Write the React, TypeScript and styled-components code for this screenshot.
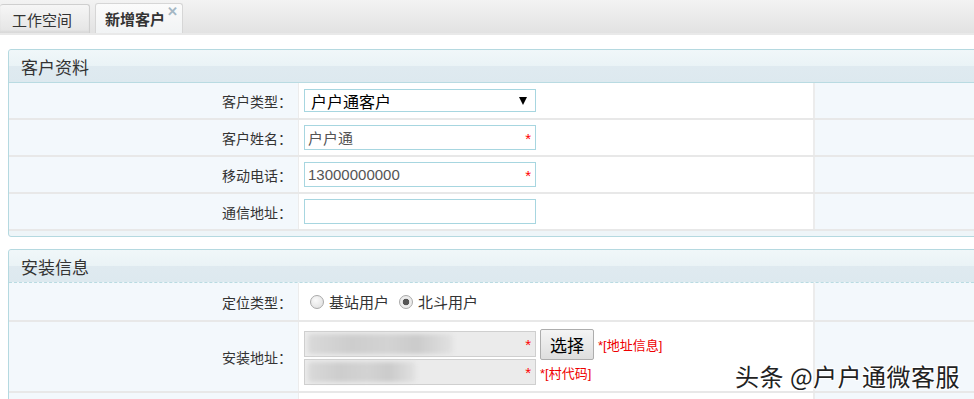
import React from "react";
import styled, { createGlobalStyle } from "styled-components";

const Global = createGlobalStyle`
  html, body { margin: 0; padding: 0; background: #fff; overflow: hidden; }
  body { font-family: "Liberation Sans", "Noto Sans CJK SC", sans-serif; color: #333; }
`;

const Page = styled.div`
  width: 974px;
  height: 399px;
  overflow: hidden;
  position: relative;
`;

const TabBar = styled.div`
  height: 33px;
  display: flex;
  align-items: flex-end;
  background: linear-gradient(#f3f3f3, #e2e2e2);
  border-bottom: 2px solid #e9e9e9;
`;

const Tab = styled.div<{ $active?: boolean }>`
  height: ${(p) => (p.$active ? 30 : 29)}px;
  width: ${(p) => (p.$active ? 88 : 90)}px;
  box-sizing: border-box;
  margin-right: 5px;
  padding-left: ${(p) => (p.$active ? 9 : 12)}px;
  display: flex;
  align-items: center;
  position: relative;
  font-size: 15px;
  font-weight: ${(p) => (p.$active ? 700 : 400)};
  color: #333;
  border: 1px solid ${(p) => (p.$active ? "#d6d6d6" : "#cfcfcf")};
  border-bottom: none;
  border-left: ${(p) => (p.$active ? "1px solid #d6d6d6" : "none")};
  border-radius: 3px 3px 0 0;
  background: ${(p) =>
    p.$active ? "linear-gradient(#fbfbfb, #f1f3f4)" : "linear-gradient(#f6f6f6, #e4e4e4)"};
  box-shadow: ${(p) => (p.$active ? "none" : "inset 0 -2px 2px rgba(0,0,0,0.05)")};
`;

const Close = styled.span`
  position: absolute;
  right: 4px;
  top: 1px;
  font-size: 13px;
  font-weight: 700;
  color: #a4b7c4;
  line-height: 1;
`;

const Content = styled.div`
  padding: 14px 0 0 8px;
  display: flex;
  flex-direction: column;
  gap: 12px;
`;

const Panel = styled.div`
  width: 1000px;
  border: 1px solid #b5d9e0;
  border-radius: 3px 0 0 3px;
  background: #eef5f8;
  padding-bottom: 5px;
`;

const PanelHeader = styled.div<{ $dotted?: boolean }>`
  height: 32px;
  display: flex;
  align-items: center;
  padding-left: 12px;
  font-size: 17px;
  color: #333;
  background: linear-gradient(#f0f7f9 0%, #eaf3f6 50%, #dfeaf0 51%, #dde9ef 100%);
  border-bottom: 1px ${(p) => (p.$dotted ? "dashed" : "solid")} #b9dbe2;
  border-radius: 3px 0 0 0;
`;

const Row = styled.div<{ $h: number }>`
  display: grid;
  grid-template-columns: 290px 514px 1fr;
  height: ${(p) => p.$h}px;
  border-bottom: 2px solid #e8e8e8;
  background: #fff;
`;

const Label = styled.div`
  background: #f3f8fc;
  display: flex;
  align-items: center;
  justify-content: flex-end;
  padding-right: 6px;
  font-size: 14px;
  color: #333;
  border-right: 1px solid #ececec;
`;

const Cell = styled.div`
  display: flex;
  align-items: center;
  padding-left: 5px;
  gap: 4px;
`;

const Filler = styled.div`
  background: #f3f8fc;
  border-left: 2px solid #ececec;
`;

const Select = styled.div`
  width: 232px;
  height: 23px;
  border: 1px solid #a7d6e0;
  display: flex;
  align-items: center;
  justify-content: space-between;
  padding: 0 8px 0 6px;
  box-sizing: border-box;
  font-size: 16px;
  color: #000;
`;

const Arrow = styled.span`
  width: 0;
  height: 0;
  border-left: 4px solid transparent;
  border-right: 4px solid transparent;
  border-top: 8px solid #000;
`;

const Input = styled.div<{ $gray?: boolean }>`
  width: 232px;
  height: 25px;
  flex: none;
  box-sizing: border-box;
  border: 1px solid ${(p) => (p.$gray ? "#cfcfcf" : "#a7d6e0")};
  background: ${(p) => (p.$gray ? "#ebebeb" : "#fff")};
  position: relative;
  display: flex;
  align-items: center;
  padding-left: 3px;
  font-size: 15px;
  color: #555;
`;

const Star = styled.span`
  position: absolute;
  right: 4px;
  top: 5px;
  color: #f00;
  font-size: 15px;
  line-height: 1;
`;

const Blur = styled.div<{ $w: number }>`
  width: ${(p) => p.$w}px;
  height: 20px;
  border-radius: 4px;
  background: linear-gradient(90deg, #d9d9d9, #cdcdcd 30%, #d3d3d3 55%, #cbcbcb 75%, #e2e2e2);
  filter: blur(2px);
`;

const Radio = styled.span<{ $checked?: boolean }>`
  width: 14px;
  height: 14px;
  border-radius: 50%;
  border: 1px solid #a9a9a9;
  background: ${(p) =>
    p.$checked
      ? "radial-gradient(circle, #555 0 3px, #ececec 3.6px)"
      : "radial-gradient(circle at 40% 35%, #fafafa 0, #dcdcdc 100%)"};
  box-sizing: border-box;
  margin-right: 5px;
`;

const RadioGroup = styled.div`
  display: flex;
  align-items: center;
  padding-left: 11px;
  gap: 10px;
`;

const RadioLabel = styled.span`
  font-size: 15px;
  color: #333;
  display: flex;
  align-items: center;
`;

const AddrCell = styled.div`
  display: flex;
  flex-direction: column;
  padding: 9px 0 0 5px;
  gap: 2px;
`;

const AddrLine = styled.div`
  display: flex;
  align-items: center;
  gap: 4px;
  height: 26px;
`;

const AddrInput = styled(Input)`
  height: 26px;
`;

const Button = styled.div`
  width: 54px;
  height: 31px;
  flex: none;
  box-sizing: border-box;
  border: 1px solid #adadad;
  border-radius: 2px;
  background: linear-gradient(#f4f4f4, #dedede);
  display: flex;
  align-items: center;
  justify-content: center;
  font-size: 17px;
  color: #000;
`;

const Hint = styled.span`
  color: #e00;
  font-size: 13px;
  white-space: nowrap;
`;

const Watermark = styled.div`
  position: absolute;
  left: 735px;
  top: 358px;
  font-size: 24px;
  color: #222;
  letter-spacing: 0.5px;
  text-shadow: 0 0 2px #fff, 1px 1px 0 #fff, -1px -1px 0 #fff, 1px -1px 0 #fff, -1px 1px 0 #fff;
  font-family: "Noto Sans CJK SC", sans-serif;
`;

export default function App() {
  return (
    <Page>
      <Global />
      <TabBar>
        <Tab>工作空间</Tab>
        <Tab $active>
          新增客户<Close>✕</Close>
        </Tab>
      </TabBar>
      <Content>
        <Panel>
          <PanelHeader>客户资料</PanelHeader>
          <Row $h={35}>
            <Label>客户类型：</Label>
            <Cell>
              <Select>
                户户通客户
                <Arrow />
              </Select>
            </Cell>
            <Filler />
          </Row>
          <Row $h={35}>
            <Label>客户姓名：</Label>
            <Cell>
              <Input>
                户户通<Star>*</Star>
              </Input>
            </Cell>
            <Filler />
          </Row>
          <Row $h={35}>
            <Label>移动电话：</Label>
            <Cell>
              <Input>
                13000000000<Star>*</Star>
              </Input>
            </Cell>
            <Filler />
          </Row>
          <Row $h={35}>
            <Label>通信地址：</Label>
            <Cell>
              <Input />
            </Cell>
            <Filler />
          </Row>
        </Panel>
        <Panel>
          <PanelHeader $dotted>安装信息</PanelHeader>
          <Row $h={37}>
            <Label>定位类型：</Label>
            <RadioGroup>
              <RadioLabel>
                <Radio />
                基站用户
              </RadioLabel>
              <RadioLabel>
                <Radio $checked />
                北斗用户
              </RadioLabel>
            </RadioGroup>
            <Filler />
          </Row>
          <Row $h={69}>
            <Label>安装地址：</Label>
            <AddrCell>
              <AddrLine>
                <AddrInput $gray>
                  <Blur $w={145} />
                  <Star>*</Star>
                </AddrInput>
                <Button>选择</Button>
                <Hint>*[地址信息]</Hint>
              </AddrLine>
              <AddrLine>
                <AddrInput $gray>
                  <Blur $w={108} />
                  <Star>*</Star>
                </AddrInput>
                <Hint>*[村代码]</Hint>
              </AddrLine>
            </AddrCell>
            <Filler />
          </Row>
          <Row $h={30}>
            <Label />
            <Cell />
            <Filler />
          </Row>
        </Panel>
      </Content>
      <Watermark>头条 @户户通微客服</Watermark>
    </Page>
  );
}
